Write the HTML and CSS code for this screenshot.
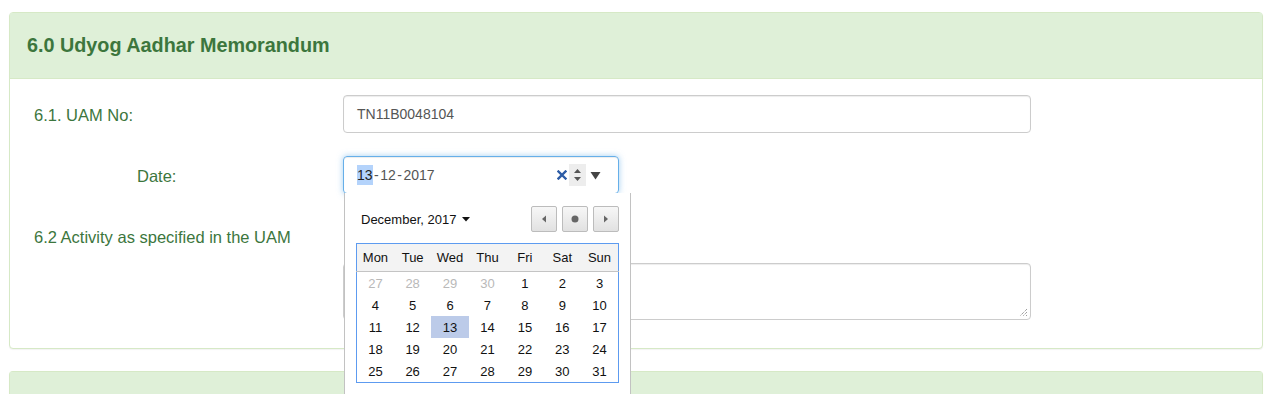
FILE: index.html
```html
<!DOCTYPE html>
<html lang="en">
<head>
  <meta charset="UTF-8">
  <title>Udyog Aadhar Memorandum</title>
  <link rel="stylesheet" href="styles.css">
</head>
<body>
  <div class="page">
    <div class="panel">
      <div class="panel-heading">
        <h3>6.0 Udyog Aadhar Memorandum</h3>
      </div>
      <div class="panel-body">
        <div class="form-row">
          <label class="form-label">6.1. UAM No:</label>
          <div class="form-input input-wide">TN11B0048104</div>
        </div>
        <div class="form-row row-date">
          <label class="form-label label-indent">Date:</label>
          <div class="date-wrap">
            <div class="form-input input-date focused">
              <span class="date-value"><span class="seg-sel">13</span><span class="sep">-</span>12<span class="sep">-</span>2017</span>
              <span class="date-controls">
                <svg class="clear-icon" width="10" height="10" viewBox="0 0 10 10"><path d="M1.5 1.5 L8.5 8.5 M8.5 1.5 L1.5 8.5" stroke="#2d5ca6" stroke-width="2.4" stroke-linecap="square"/></svg>
                <span class="spin">
                  <svg width="9" height="18" viewBox="0 0 9 18"><path d="M1 7 L4.5 3 L8 7 Z" fill="#555"/><path d="M1 11 L4.5 15 L8 11 Z" fill="#555"/></svg>
                </span>
                <svg class="drop-icon" width="11" height="9" viewBox="0 0 11 9"><path d="M0.5 1 L10.5 1 L5.5 8.5 Z" fill="#444"/></svg>
              </span>
            </div>
            <div class="datepicker">
              <div class="dp-head">
                <span class="dp-month">December, 2017
                  <svg width="8" height="5" viewBox="0 0 8 5"><path d="M0 0 L8 0 L4 4.5 Z" fill="#111"/></svg>
                </span>
                <div class="dp-nav">
                  <button class="dp-btn"><svg width="6" height="8" viewBox="0 0 6 8"><path d="M5 0.5 L5 7.5 L1 4 Z" fill="#666"/></svg></button>
                  <button class="dp-btn"><svg width="8" height="8" viewBox="0 0 8 8"><circle cx="4" cy="4" r="3.5" fill="#666"/></svg></button>
                  <button class="dp-btn"><svg width="6" height="8" viewBox="0 0 6 8"><path d="M1 0.5 L1 7.5 L5 4 Z" fill="#666"/></svg></button>
                </div>
              </div>
              <table class="dp-table">
                <thead>
                  <tr><th>Mon</th><th>Tue</th><th>Wed</th><th>Thu</th><th>Fri</th><th>Sat</th><th>Sun</th></tr>
                </thead>
                <tbody id="dpBody"></tbody>
              </table>
            </div>
          </div>
        </div>
        <div class="form-row row-label">
          <label class="form-label">6.2 Activity as specified in the UAM</label>
        </div>
        <div class="form-row">
          <span class="form-spacer"></span>
          <div class="form-input input-wide textarea">
            <svg class="grip" width="10" height="10" viewBox="0 0 10 10"><path d="M9 2 L2 9 M9 5 L5 9 M9 8 L8 9" stroke="#777" stroke-width="1" stroke-dasharray="1 1"/></svg>
          </div>
        </div>
      </div>
    </div>
    <div class="panel panel-next">
      <div class="panel-heading"></div>
    </div>
  </div>

  <script>
    // build December 2017 grid (starts Monday)
    const days = [27, 28, 29, 30].map(d => ({ d, muted: true }));
    for (let i = 1; i <= 31; i++) days.push({ d: i, muted: false });
    const body = document.getElementById('dpBody');
    for (let r = 0; r < 5; r++) {
      const row = document.createElement('tr');
      days.slice(r * 7, r * 7 + 7).forEach(day => {
        const cell = document.createElement('td');
        cell.textContent = day.d;
        if (day.muted) cell.className = 'muted';
        if (!day.muted && day.d === 13) cell.className = 'selected';
        row.appendChild(cell);
      });
      body.appendChild(row);
    }
  </script>
</body>
</html>
```

FILE: styles.css
```css
body {
  font-family: "Liberation Sans", Arial, sans-serif;
  background-color: #fff;
  color: #333;
  margin: 0;
  padding: 0;
}
.page {
  padding: 12px 12px 0 9px;
  overflow: hidden;
  height: 382px;
}
.panel {
  border: 1px solid #d6e9c6;
  border-radius: 4px;
  background-color: #fff;
  box-shadow: 0 1px 1px rgba(0, 0, 0, 0.05);
}
.panel-heading {
  background-color: #dff0d8;
  border-bottom: 1px solid #d6e9c6;
  padding: 0 17px;
  height: 65px;
  display: flex;
  align-items: center;
}
.panel-heading h3 {
  margin: 0;
  font-size: 19.8px;
  font-weight: bold;
  color: #3c763d;
}
.panel-body {
  padding: 16px 24px 28px;
}
.panel-next {
  margin-top: 22px;
  border-bottom: none;
}
.panel-next .panel-heading {
  border-bottom: none;
  height: 40px;
}
.form-row {
  display: flex;
  align-items: center;
}
.form-row + .form-row {
  margin-top: 23px;
}
.form-row.row-label {
  margin-top: 31px;
}
.form-row.row-label + .form-row {
  margin-top: 16px;
}
.form-label {
  width: 309px;
  flex: none;
  font-size: 16.5px;
  color: #3c763d;
  line-height: 20px;
  padding-top: 2px;
  box-sizing: border-box;
}
.label-indent {
  padding-left: 103px;
}
.form-spacer {
  width: 309px;
  flex: none;
}
.form-input {
  box-sizing: border-box;
  height: 38px;
  border: 1px solid #ccc;
  border-radius: 4px;
  box-shadow: inset 0 1px 1px rgba(0, 0, 0, 0.075);
  padding: 0 13px;
  font-size: 14px;
  color: #555;
  display: flex;
  align-items: center;
}
.input-wide {
  width: 688px;
}
.textarea {
  height: 57px;
  position: relative;
}
.grip {
  position: absolute;
  right: 2px;
  bottom: 2px;
}
.date-wrap {
  position: relative;
}
.input-date {
  width: 276px;
  justify-content: space-between;
  padding-right: 17px;
}
.focused {
  border-color: #66afe9;
  box-shadow: inset 0 1px 1px rgba(0, 0, 0, 0.075), 0 0 6px rgba(102, 175, 233, 0.6);
}
.date-value {
  color: #555;
}
.seg-sel {
  background-color: #b4d3fb;
  color: #222;
  padding: 2px 0 2px 0;
}
.sep {
  padding: 0 1.5px;
}
.date-controls {
  display: flex;
  align-items: center;
}
.clear-icon {
  margin-right: 2px;
}
.spin {
  display: flex;
  align-items: center;
  justify-content: center;
  width: 17px;
  height: 22px;
  background-color: #ededed;
}
.drop-icon {
  margin-left: 4px;
}
.datepicker {
  position: absolute;
  top: 37px;
  left: 1px;
  width: 287px;
  height: 240px;
  box-sizing: border-box;
  background-color: #fff;
  border: 1px solid #c2c2c2;
  border-top: none;
  padding: 13px 11px 0;
  z-index: 2;
}
.dp-head {
  display: flex;
  justify-content: space-between;
  align-items: center;
  padding-left: 5px;
  margin-bottom: 11px;
}
.dp-month {
  font-size: 13px;
  color: #111;
  display: flex;
  align-items: center;
  gap: 6px;
}
.dp-nav {
  display: flex;
  gap: 5px;
}
.dp-btn {
  width: 26px;
  height: 26px;
  padding: 0;
  border: 1px solid #bcbcbc;
  border-radius: 2px;
  background: linear-gradient(#f7f7f7, #e1e1e1);
  display: flex;
  align-items: center;
  justify-content: center;
}
.dp-table {
  width: 100%;
  border-collapse: collapse;
  border: 1px solid #5d9bf0;
  font-size: 13px;
  color: #111;
  table-layout: fixed;
}
.dp-table th {
  background-color: #f3f3f3;
  font-weight: normal;
  height: 27px;
  padding: 0;
  border-bottom: 1px solid #c4c4c4;
  text-align: center;
}
.dp-table td {
  height: 22px;
  padding: 0;
  text-align: center;
}
.dp-table td.muted {
  color: #b9b9b9;
}
.dp-table td.selected {
  background-color: #bccbe9;
}
```
